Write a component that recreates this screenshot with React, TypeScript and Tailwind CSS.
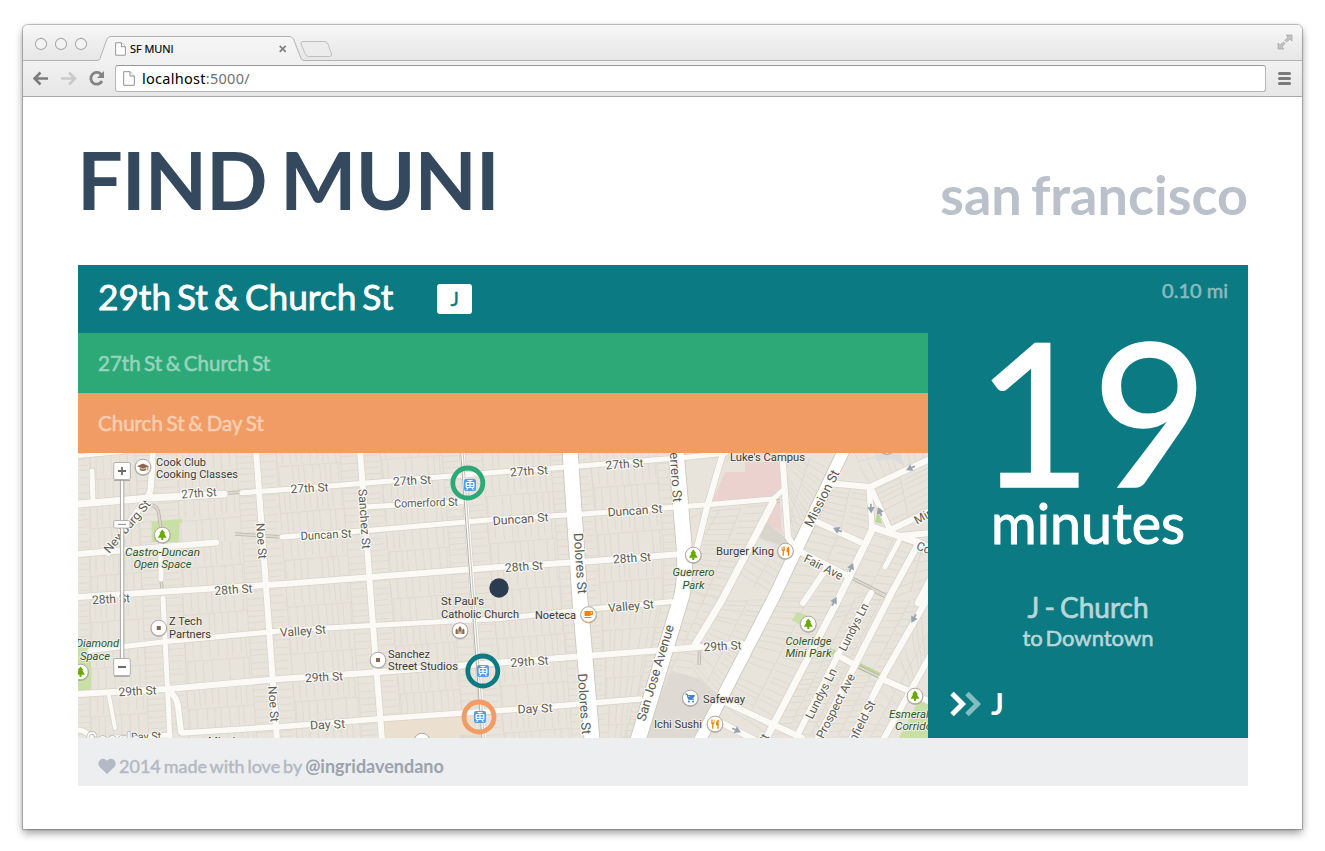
import React from "react";

type Pt = [number, number];
type Quad = [Pt, Pt, Pt, Pt];

const lerp = (a: Pt, b: Pt, t: number): Pt => [a[0] + (b[0] - a[0]) * t, a[1] + (b[1] - a[1]) * t];
const dist = (a: Pt, b: Pt) => Math.hypot(a[0] - b[0], a[1] - b[1]);
const seg = (a: Pt, b: Pt) => `M${a[0].toFixed(1)} ${a[1].toFixed(1)}L${b[0].toFixed(1)} ${b[1].toFixed(1)}`;

const makeRandom = (start: number) => {
  let s = start;
  return () => {
    s = (s * 16807) % 2147483647;
    return s / 2147483647;
  };
};

// Property lots of one block: narrow lots on both long sides, turned lots on the short sides.
function lots([a, b, c, d]: Quad, seed: number, ends: boolean): string {
  const rnd = makeRandom(seed * 7919 + 13);
  const at = (u: number, v: number) => lerp(lerp(a, b, u), lerp(d, c, u), v);
  const w = dist(a, b);
  const h = dist(a, d);
  const e = ends && w > 60 ? 20 / w : 0;
  let out = seg(at(e, 0.5), at(1 - e, 0.5));
  if (e) {
    out += seg(at(e, 0), at(e, 1)) + seg(at(1 - e, 0), at(1 - e, 1));
    for (let v = 4 / h; v < 1; v += (5 + rnd() * 3) / h) {
      out += seg(at(0, v), at(e * (0.8 + rnd() * 0.2), v)) + seg(at(1 - e, v), at(1, v));
    }
  }
  for (let u = e; u < 1 - e; u += (5 + rnd() * 4) / w) {
    const gap = rnd() * 0.1;
    out += seg(at(u, 0), at(u, 0.5 - gap));
    if (rnd() > 0.12) out += seg(at(u + 1.5 / w, 0.5), at(u + 1.5 / w, 1));
  }
  return out;
}

const rowsY: ((x: number) => number)[] = [
  (x) => 443 - (x - 290) * 0.06,
  (x) => 490 - (x - 280) * 0.08,
  (x) => 537 - (x - 280) * 0.082,
  (x) => 585 - (x - 280) * 0.082,
  (x) => 630 - (x - 290) * 0.075,
  (x) => 679 - (x - 280) * 0.074,
  (x) => 727 - (x - 280) * 0.077,
  (x) => 774 - (x - 280) * 0.077,
];
const colsX: ((y: number) => number)[] = [
  () => 70,
  (y) => 156 + (y - 453) * 0.046,
  (y) => 256 + (y - 453) * 0.073,
  (y) => 360 + (y - 453) * 0.078,
  (y) => 462 + (y - 453) * 0.077,
  (y) => 570 + (y - 453) * 0.078,
  (y) => (y < 570 ? 676 + (y - 453) * 0.08 : 685 - (y - 590) * 0.3),
];

const gridBlocks: Quad[] = [];
for (let c = 0; c < 6; c++) {
  for (let r = 0; r < 7; r++) {
    const corner = (ci: number, ri: number): Pt => {
      let x = colsX[ci](520);
      let y = rowsY[ri](x);
      x = colsX[ci](y);
      y = rowsY[ri](x);
      return [x, y];
    };
    gridBlocks.push([corner(c, r), corner(c + 1, r), corner(c + 1, r + 1), corner(c, r + 1)]);
  }
}

const slantBlocks: Quad[] = [
  [[770, 505], [722, 600], [690, 590], [712, 510]],
  [[834, 472], [790, 550], [785, 500], [785, 445]],
  [[812, 525], [772, 600], [735, 575], [775, 505]],
  [[722, 600], [660, 738], [620, 738], [690, 590]],
  [[772, 600], [702, 738], [680, 690], [725, 600]],
  [[868, 540], [838, 600], [780, 600], [812, 524]],
  [[838, 600], [768, 735], [725, 705], [778, 600]],
  [[870, 595], [800, 735], [770, 735], [842, 600]],
  [[890, 600], [820, 738], [800, 735], [872, 598]],
  [[928, 600], [852, 738], [822, 738], [893, 600]],
  [[928, 660], [885, 738], [855, 738], [928, 605]],
  [[915, 546], [890, 600], [840, 600], [872, 532]],
  [[868, 488], [868, 536], [814, 520], [833, 484]],
  [[928, 462], [928, 512], [890, 530], [872, 490]],
  [[870, 484], [928, 456], [928, 430], [845, 440]],
  [[928, 585], [928, 550], [915, 548], [893, 600]],
  [[780, 462], [722, 462], [740, 430], [780, 430]],
  [[720, 510], [708, 506], [690, 505], [690, 560]],
];

const lotPath = gridBlocks.map((q, i) => lots(q, i + 1, true)).join("");
const slantPath = slantBlocks.map((q, i) => lots(q, i + 80, false)).join("");

const roads: { d: string; w: number }[] = [
  { w: 7, d: "M78 504L150 498L224 494" },
  { w: 5, d: "M242 492.7L290 489.3L500 472L580 466L687 457.3L726 453" },
  { w: 5, d: "M282 537L373 530L500 519L583 514L710 504.6L773 499L782 491" },
  { w: 6, d: "M78 554L216 542.6" },
  { w: 6, d: "M78 597L290 583.5L500 567L580 562L682 554" },
  { w: 5, d: "M368 506.7L466 501.4" },
  { w: 5, d: "M90 650.6L167 641.6L290 630L500 618.5L600 608.3L672 601.6" },
  { w: 6, d: "M78 694L167 689L280 679L373 672.6L500 662.6L657 650.6L742 643.5" },
  { w: 5.5, d: "M182 733L290 726L377 719L500 710.6L640 699" },
  { w: 6, d: "M168 690Q177 697 178 706L181 732" },
  { w: 5, d: "M92 471L93 502" },
  { w: 4, d: "M109 696L115 728" },
  { w: 5, d: "M76 730Q88 730 92 740M112 738L170 735" },
  { w: 4, d: "M78 456L122 452" },
  { w: 6, d: "M153 450L151 486Q151 494 143 503L108 553" },
  { w: 5, d: "M161 545L161 579" },
  { w: 5, d: "M163 598L170 740" },
  { w: 6, d: "M256 450L267 600L277 740" },
  { w: 6, d: "M360 450L371 600L382 740" },
  { w: 5, d: "M462 450L473 600L484 740" },
  { w: 6, d: "M723 453L707 507L697 548" },
  { w: 6, d: "M782 450L788 537L797 551" },
  { w: 7, d: "M773 502L722 600L695 645" },
  { w: 6, d: "M832 483.5L870 487L930 459" },
  { w: 5.5, d: "M869 487L872 527M871 488L890 530" },
  { w: 6, d: "M813 520L860 542" },
  { w: 7, d: "M872 527L917 542L930 548" },
  { w: 6, d: "M890 530L930 511M900 536L930 533" },
  { w: 7, d: "M872 530L838 600L768 735" },
  { w: 5, d: "M899 541L885 567" },
  { w: 6.5, d: "M917 546L892 592L817 740" },
  { w: 6, d: "M797 550L850 577" },
  { w: 6, d: "M826 569L803 603" },
  { w: 6, d: "M871 593L837 657L797 736" },
  { w: 6, d: "M837 655L855 665" },
  { w: 6.5, d: "M930 594L882 678L851 740" },
  { w: 6, d: "M882 679L907 690L930 702" },
  { w: 6, d: "M930 656L883 740" },
  { w: 6, d: "M727 703L802 738" },
  { w: 6, d: "M718 721L755 740" },
  { w: 6.5, d: "M930 580L918 603" },
];

const avenues: { d: string; w: number }[] = [
  { w: 15, d: "M570 450L580 600L592 740" },
  { w: 15, d: "M676 450L684 545Q686 575 682 595L638 740" },
  { w: 11.5, d: "M844 450L775 595L700 740" },
];

const lanes = [
  "M150 505Q158 505 159 515L161 530",
  "M161 579L163 597",
  "M228 493L242 492",
  "M235 534L282 537",
  "M850 577L887 596",
  "M855 665L882 678",
  "M872 590L888 598",
  "M768 500L780 501",
  "M700 640L699 665",
];

type Label = { t: string; x: number; y: number; r?: number; w?: number; s?: number; k?: "park" | "place"; a?: "start" | "middle" | "end" };

// x and y give the middle of the text (or its start or end), w its drawn width.
const labels: Label[] = [
  { t: "27th St", x: 199, y: 493, r: -4, w: 35 },
  { t: "27th St", x: 309.5, y: 488, r: -3, w: 38 },
  { t: "27th St", x: 412, y: 480.5, r: -3, w: 38 },
  { t: "27th St", x: 529, y: 471, r: -4, w: 38 },
  { t: "27th St", x: 624.5, y: 464, r: -4, w: 38 },
  { t: "Comerford St", x: 426, y: 502.5, r: -2, w: 64, s: 11.5 },
  { t: "Duncan St", x: 326, y: 534.5, r: -3, w: 51, s: 11.5 },
  { t: "Duncan St", x: 520.5, y: 519, r: -4, w: 56 },
  { t: "Duncan St", x: 635, y: 510.5, r: -4, w: 55 },
  { t: "28th St", x: 233.5, y: 589.5, r: -4, w: 38 },
  { t: "28th St", x: 524, y: 566.5, r: -4, w: 38 },
  { t: "28th St", x: 632, y: 558, r: -4, w: 38 },
  { t: "28th St", x: 111, y: 599, r: -3, w: 38 },
  { t: "Valley St", x: 303, y: 631, r: -4, w: 46 },
  { t: "Valley St", x: 631, y: 606, r: -5, w: 46 },
  { t: "29th St", x: 137.5, y: 691, r: -3, w: 38 },
  { t: "29th St", x: 324, y: 677, r: -3, w: 38 },
  { t: "29th St", x: 529.5, y: 661.5, r: -4, w: 38 },
  { t: "29th St", x: 722.5, y: 646, r: -3, w: 38 },
  { t: "Day St", x: 327.5, y: 724.5, r: -3, w: 35 },
  { t: "Day St", x: 535, y: 708.5, r: -3, w: 35 },
  { t: "Day St", x: 146, y: 736.5, r: -2, w: 30 },
  { t: "Noe St", x: 261.5, y: 541, r: 86, w: 36 },
  { t: "Noe St", x: 273.5, y: 704, r: 86, w: 36 },
  { t: "Sanchez St", x: 364.5, y: 519, r: 86, w: 60 },
  { t: "Dolores St", x: 580, y: 563.5, r: 86, w: 61, s: 13 },
  { t: "Dolores St", x: 584, y: 704, r: 86, w: 61, s: 13 },
  { t: "Guerrero St", x: 675, y: 469, r: 86, w: 66, s: 13 },
  { t: "San Jose Avenue", x: 655.5, y: 673, r: -73, w: 100, s: 13 },
  { t: "Mission St", x: 822, y: 498.5, r: -63, w: 62, s: 13 },
  { t: "Newburg St", x: 127, y: 526.5, r: -50, w: 65, s: 12 },
  { t: "Fair Ave", x: 823.5, y: 567, r: 27, w: 42 },
  { t: "Lundys Ln", x: 853.5, y: 627, r: -63, w: 52 },
  { t: "Lundys Ln", x: 821, y: 693.5, r: -63, w: 55 },
  { t: "Prospect Ave", x: 835.5, y: 706, r: -63, w: 71 },
  { t: "Winfield St", x: 859, y: 727, r: -63, w: 58 },
  { t: "Mirabel", x: 915, y: 521, r: -30, a: "start" },
  { t: "Coso Ave", x: 917, y: 545, r: 22, a: "start" },
  { t: "Mission St", x: 753, y: 759, r: -62, w: 55 },
  { t: "Cook Club", x: 156, y: 461.5, k: "place", a: "start", w: 50 },
  { t: "Cooking Classes", x: 156, y: 474, k: "place", a: "start", w: 82 },
  { t: "Z Tech", x: 169, y: 621, k: "place", a: "start", w: 33 },
  { t: "Partners", x: 169, y: 634, k: "place", a: "start", w: 42 },
  { t: "Sanchez", x: 388, y: 653.5, k: "place", a: "start", w: 42 },
  { t: "Street Studios", x: 388, y: 666, k: "place", a: "start", w: 70 },
  { t: "St Paul's", x: 441, y: 601, k: "place", a: "start", w: 43 },
  { t: "Catholic Church", x: 441, y: 614, k: "place", a: "start", w: 78 },
  { t: "Noeteca", x: 535, y: 615, k: "place", a: "start", w: 41 },
  { t: "Burger King", x: 716, y: 551, k: "place", a: "start", w: 58 },
  { t: "Luke's Campus", x: 730, y: 457, k: "place", a: "start", w: 75 },
  { t: "Safeway", x: 703, y: 699, k: "place", a: "start", w: 42 },
  { t: "Ichi Sushi", x: 654, y: 724, k: "place", a: "start", w: 48 },
  { t: "Mission", x: 208, y: 741, k: "place", a: "start", w: 40 },
  { t: "Castro-Duncan", x: 162.5, y: 552, k: "park", w: 75 },
  { t: "Open Space", x: 162.5, y: 564, k: "park", w: 58 },
  { t: "Diamond", x: 119, y: 643, k: "park", a: "end", w: 43 },
  { t: "Space", x: 110, y: 656, k: "park", a: "end", w: 30 },
  { t: "Guerrero", x: 693.5, y: 572, k: "park", w: 42 },
  { t: "Park", x: 693.5, y: 585, k: "park", w: 22 },
  { t: "Coleridge", x: 808.5, y: 641, k: "park", w: 46 },
  { t: "Mini Park", x: 808.5, y: 653, k: "park", w: 46 },
  { t: "Esmeralda", x: 889, y: 714, k: "park", a: "start", w: 52 },
  { t: "Corridor", x: 895, y: 726, k: "park", a: "start", w: 41 },
];

const labelFill = { road: "#5d5b52", park: "#2b5a2b", place: "#3c3a38" };

function MapLabel({ t, x, y, r = 0, w, s = 12, k, a = "middle" }: Label) {
  return (
    <text
      transform={`translate(${x} ${y}) rotate(${r})`}
      y={4.2}
      fontSize={k ? 11.7 : s}
      textAnchor={a}
      textLength={w}
      lengthAdjust="spacingAndGlyphs"
      fill={labelFill[k ?? "road"]}
      fontStyle={k === "park" ? "italic" : "normal"}
      stroke={k ? "#efece6" : "#fbfaf7"}
      strokeWidth={2.2}
      strokeLinejoin="round"
      paintOrder="stroke"
    >
      {t}
    </text>
  );
}

function Poi({ x, y, children }: { x: number; y: number; children: React.ReactNode }) {
  return (
    <g transform={`translate(${x} ${y})`}>
      <circle cy={0.6} r={8.4} fill="#6f6a64" opacity={0.4} />
      <circle r={7.8} fill="#fff" stroke="#aaa49c" strokeWidth={0.9} />
      {children}
    </g>
  );
}

const Tree = () => <path d="M0-5.5L3-1.8H1.8L4.4 2.8H1V5H-1V2.8H-4.4L-1.8-1.8H-3Z" fill="#6aaa00" />;
const Square = () => <rect x={-2} y={-2} width={4} height={4} fill="#8d6748" />;
const Food = () => (
  <path d="M-3.9-4.5V-1.2Q-3.9 0-2.9.2V4.8H-1.6V.2Q-.5 0-.5-1.2V-4.5H-1.2V-1.4H-1.9V-4.5H-2.6V-1.4H-3.2V-4.5ZM3.7-4.5Q1 -4 1 0V1.2H2.3V4.8H3.7Z" fill="#f5820b" />
);
const arrowPath = "M-5 0H2M0-2.6L4.5 0L0 2.6Z";

function Stop({ x, y, color, ix, iy }: { x: number; y: number; color: string; ix: number; iy: number }) {
  return (
    <g>
      <circle cx={x} cy={y} r={15} fill="none" stroke={color} strokeWidth={4.8} />
      <rect x={ix - 6} y={iy - 6} width={12} height={12} rx={2} fill="#4f9fee" />
      <g transform={`translate(${ix} ${iy})`} fill="none" stroke="#fff">
        <path d="M-2.5-4.5H2.5M0-4.5V-2.8" strokeWidth={1} />
        <rect x={-3.8} y={-2.5} width={7.6} height={5} rx={0.8} strokeWidth={1.2} />
        <path d="M0-2.5V2.5M-3.9 0.2H3.9M-3.4 4.8L-2 3M3.4 4.8L2 3" strokeWidth={1.1} />
      </g>
    </g>
  );
}

function StreetMap() {
  return (
    <svg className="block h-[285px] w-[850px]" viewBox="78 453 850 285" fontFamily="Roboto, 'Liberation Sans', sans-serif">
      <rect x={78} y={453} width={850} height={285} fill="#e8e4dc" />
      <path d={lotPath} stroke="#dcd7cd" strokeWidth={0.7} fill="none" />
      <path d="M697 440H930V740H640L690 590Z" fill="#e8e4dc" />
      <path d={slantPath} stroke="#dad5cb" strokeWidth={0.7} fill="none" />
      <path d="M725 472H745V462H780L783 490L770 497L712 502Z" fill="#ebd2cf" />
      <path d="M772 503L780 503L782 532L765 523Z" fill="#ebd2cf" />
      <path d="M767 523L790 541L787 548L757 537Z" fill="#d9d5cd" />
      <path d="M672 671L700 679L717 694L706 722L690 740H640Z" fill="#ded9d2" />
      <path d="M383 722L473 715L478 740H385Z" fill="#ebe0d0" />
      <path d="M460 738V735H480V740H460Z" fill="#ded9d2" />
      <path d="M875 453H900L903 466L893 459L876 461Z" fill="#dcdcdd" />
      <path d="M151.7 521.5L182 519V523H179V542H151.7Z" fill="#c8dfa5" />
      <path d="M78 642L91 649V690L78 691Z" fill="#c8dfa5" />
      <path d="M878 510L875 522L882 524Z" fill="#b9d796" />
      <path d="M797 612L815 618L813 632L792 620Z" fill="#c8dfa5" />
      <path d="M829 650L840 656" stroke="#b9d796" strokeWidth={5} />
      <path d="M859 666L882 677" stroke="#b9d796" strokeWidth={6} />
      <path d="M918 702L930 700V740H898Z" fill="#c8dfa5" />
      <g fill="none">
        {lanes.map((d) => (
          <path key={d} d={d} stroke="#b9b4a9" strokeWidth={3.4} />
        ))}
        {lanes.map((d) => (
          <path key={d} d={d} stroke="#dedad1" strokeWidth={1.8} />
        ))}
      </g>
      <g fill="none" strokeLinecap="round" strokeLinejoin="round">
        {roads.map((r) => (
          <path key={r.d} d={r.d} stroke="#d8d3c9" strokeWidth={r.w + 1.4} />
        ))}
        {avenues.map((r) => (
          <path key={r.d} d={r.d} stroke="#cdc8bd" strokeWidth={r.w + 1.8} />
        ))}
        {roads.map((r) => (
          <path key={r.d} d={r.d} stroke="#fbfaf7" strokeWidth={r.w} />
        ))}
        {avenues.map((r) => (
          <path key={r.d} d={r.d} stroke="#ffffff" strokeWidth={r.w} />
        ))}
        <path d="M460.5 450L471.5 600L482 740" stroke="#a8a59e" strokeWidth={0.9} />
        <path d="M463 450L473.8 600L484.5 740" stroke="#bdb9b1" strokeWidth={0.8} />
      </g>

      <g fill="#98a3b1" stroke="#98a3b1" strokeWidth={2}>
        {[
          [911, 468, 155],
          [871, 508, 88],
          [880, 512, -112],
          [838, 530, 205],
          [851, 568, -68],
          [834, 602, -62],
          [914, 618, 118],
          [736, 730, 25],
        ].map(([x, y, r]) => (
          <path key={`${x}-${y}`} d={arrowPath} transform={`translate(${x} ${y}) rotate(${r}) scale(.85)`} />
        ))}
      </g>

      {labels.map((l, i) => (
        <MapLabel key={i} {...l} />
      ))}

      <Poi x={143} y={467}>
        <path d="M-6-.8L0-3.4L6-.8L0 1.8ZM-3.2 1V3Q0 4.8 3.2 3V1L0 2.4Z" fill="#8d6748" />
        <path d="M4.8-.6V3.5" stroke="#8d6748" strokeWidth={0.9} />
      </Poi>
      <Poi x={162.3} y={535}><Tree /></Poi>
      <Poi x={80.5} y={672}><Tree /></Poi>
      <Poi x={693.3} y={555}><Tree /></Poi>
      <Poi x={808.3} y={624}><Tree /></Poi>
      <Poi x={915} y={696}><Tree /></Poi>
      <Poi x={158.8} y={628}><Square /></Poi>
      <Poi x={378} y={660}><Square /></Poi>
      <Poi x={422} y={741}><Square /></Poi>
      <Poi x={887} y={446}><circle r={7.4} fill="#fff" /></Poi>
      <Poi x={785.5} y={551}><Food /></Poi>
      <Poi x={715} y={724}><Food /></Poi>
      <Poi x={460} y={630.5}>
        <path d="M-4.4 3.6V-.6L-3.3-2L-2.2-.6V3.6ZM-1.6 3.6V-2.2L0-4.4L1.6-2.2V3.6H.6V1H-.6V3.6ZM2.2 3.6V-.6L3.3-2L4.4-.6V3.6Z" fill="#8d6748" />
      </Poi>
      <Poi x={588.5} y={614.5}>
        <path d="M-4-3.6H4.4V.4H2V1.6H-3Q-4 1.6-4 .4ZM2.2-2.4V-.8H3.3V-2.4ZM-4.2 2.5H2.8V3.6H-4.2Z" fill="#f5820b" fillRule="evenodd" />
      </Poi>
      <Poi x={690.3} y={698}>
        <path d="M-5-4H-3.2L-1.8 1.3H3.6M-2.8-2.4H4.2L3-.4H-2.2Z" fill="#3f7fd0" stroke="#3f7fd0" strokeWidth={1} />
        <circle cx={-1.4} cy={3.4} r={1} fill="#3f7fd0" />
        <circle cx={2.8} cy={3.4} r={1} fill="#3f7fd0" />
      </Poi>

      <text x={86} y={746.5} fontSize={20} fill="#ffffff" stroke="#b9b6b1" strokeWidth={1.6} paintOrder="stroke" textLength={54} lengthAdjust="spacingAndGlyphs">
        Google
      </text>

      <rect x={120.4} y={478} width={3.4} height={182} fill="#fff" stroke="#a3a19d" strokeWidth={0.9} />
      <g fill="#fff" stroke="#b3b1ad" strokeWidth={1}>
        <path d="M114 480.5H130M114 676.5H130" stroke="#8b8985" strokeWidth={1.2} opacity={0.6} />
        <rect x={113.7} y={462.5} width={16.6} height={17} rx={1.5} />
        <rect x={113.7} y={658.5} width={16.6} height={17} rx={1.5} />
        <rect x={113.7} y={520.5} width={16.2} height={7.6} rx={1.5} />
      </g>
      <path d="M118 471H126M122 467V475M118 667H126" stroke="#6b6b6b" strokeWidth={1.8} />
      <path d="M118 524.4H126" stroke="#8a8a8a" strokeWidth={1} />

      <Stop x={467.8} y={483} ix={470} iy={485} color="#2ca977" />
      <Stop x={482.8} y={671} ix={483} iy={671} color="#0b7a82" />
      <Stop x={479} y={717} ix={480} iy={717} color="#f19c65" />
      <circle cx={499} cy={588} r={9.7} fill="#2b3b50" />
    </svg>
  );
}

function PageIcon({ className }: { className: string }) {
  return (
    <svg viewBox="0 0 12 15" className={className} fill="#fff" stroke="#8f8f8f" strokeWidth={1}>
      <path d="M.7.7H7L11.3 5V14.3H.7Z" />
      <path d="M7 .7V5H11.3" />
    </svg>
  );
}

function TabStrip() {
  return (
    <div className="relative h-9 bg-linear-to-b from-[#f7f7f7] to-[#e6e6e6]">
      <svg className="absolute inset-0 h-9 w-full" viewBox="23 25 1279 36">
        <defs>
          <linearGradient id="tab" x1="0" y1="0" x2="0" y2="1">
            <stop offset="0" stopColor="#f6f6f6" />
            <stop offset="1" stopColor="#f0f0f0" />
          </linearGradient>
        </defs>
        <path d="M23 60.5H97Q99 60.5 100 58.5L107 39Q108 36.5 111 36.5H289Q292 36.5 293.5 39L301 58.5Q302 60.5 304 60.5H1302V62H23Z" fill="url(#tab)" />
        <path d="M23 60.5H97Q99 60.5 100 58.5L107 39Q108 36.5 111 36.5H289Q292 36.5 293.5 39L301 58.5Q302 60.5 304 60.5H1302" fill="none" stroke="#b3b3b3" />
        <path d="M303 41.5H324Q327 41.5 328 44L331.5 54Q332 56.5 329.5 56.5H309Q306.5 56.5 305.5 54.5L301 44Q300.5 41.5 303 41.5Z" fill="#ececec" stroke="#bebebe" />
        {[41, 61, 81].map((x) => (
          <circle key={x} cx={x} cy={44} r={5.6} fill="#f3f3f3" stroke="#ababab" strokeWidth={1.1} />
        ))}
        <path d="M279.7 45.9L285.7 51.9M285.7 45.9L279.7 51.9" stroke="#808080" strokeWidth={1.6} />
        <path d="M1286 35H1292V41L1290 39L1286.5 42L1285 40.5L1288 37ZM1284 49H1278V43L1280 45L1283.5 42L1285 43.5L1282 47Z" fill="#c3c3c3" stroke="#a5a5a5" strokeWidth={0.7} />
      </svg>
      <div className="relative flex h-full items-center gap-[4px] pt-[12px] pl-[92px]">
        <PageIcon className="h-[14px] w-[11px]" />
        <span className="font-['Open_Sans',sans-serif] text-[11px] font-medium tracking-[-0.05px] text-black [-webkit-text-stroke:0.2px_#000]">SF MUNI</span>
      </div>
    </div>
  );
}

function Toolbar() {
  return (
    <div className="flex h-9 items-center border-b border-[#a9a9a9] bg-linear-to-b from-[#f1f1f1] to-[#e7e7e7] pl-[10px]">
      <svg className="h-9 w-[82px] shrink-0" viewBox="33 61 82 36" fill="none" strokeWidth={2.6}>
        <path d="M48 78.5H35M40.5 72.5L34.5 78.5L40.5 84.5" stroke="#7c7c7c" />
        <path d="M61 78.5H74M69 72.5L75 78.5L69 84.5" stroke="#c9c9c9" />
        <path d="M101.5 74.8A5.9 5.9 0 1 0 102 81" stroke="#838383" strokeWidth={2.8} />
        <path d="M104 71V78H97Z" fill="#838383" />
      </svg>
      <div className="flex h-[27px] w-[1151px] items-center gap-[7px] rounded-[3px] border border-[#b5b5b5] border-t-[#989898] bg-white pl-[7px]">
        <PageIcon className="h-[15px] w-[12px]" />
        <span className="font-['Noto_Sans',sans-serif] text-[14.5px] leading-none tracking-[0.28px] text-[#6f6f6f]">
          <span className="text-black">localhost</span>:5000/
        </span>
      </div>
      <div className="ml-[12px] flex w-[13px] flex-col gap-[2px]">
        <div className="h-[3px] rounded-sm bg-[#7a7a7a]" />
        <div className="h-[3px] rounded-sm bg-[#7a7a7a]" />
        <div className="h-[3px] rounded-sm bg-[#7a7a7a]" />
      </div>
    </div>
  );
}

export default function App() {
  return (
    <div className="h-[851px] w-[1325px] overflow-hidden bg-white pt-[25px] pl-[23px] font-['Lato',sans-serif]">
      <div className="h-[804px] w-[1279px] overflow-hidden rounded-t-[5px] bg-white shadow-[0_0_1px_1px_rgba(0,0,0,0.25),0_4px_9px_rgba(0,0,0,0.4)]">
        <TabStrip />
        <Toolbar />
        <main className="pr-[54px] pl-[55px]">
          <header className="flex h-[168px] items-start justify-between whitespace-nowrap">
            <h1 className="mt-[32px] -ml-px text-[81px] leading-[100px] font-bold tracking-[-1.1px] text-[#34495e] [word-spacing:-5px]">FIND MUNI</h1>
            <p className="mt-[63px] text-[54px] leading-[70px] font-bold text-[#bac1ca] [word-spacing:-4px]">san francisco</p>
          </header>
          <section className="flex h-[473px] bg-[#0b7a82] whitespace-nowrap">
            <div className="w-[850px]">
              <div className="flex h-[68px] items-center gap-[44px] pl-5 text-white">
                <span className="-mt-1 text-[35.2px] leading-none [word-spacing:-3px] [-webkit-text-stroke:0.8px_#fff]">29th St &amp; Church St</span>
                <span className="flex h-[30px] w-[35px] items-center justify-center rounded-[3px] bg-white pb-[2px] text-[20px] text-[#0b7a82] [-webkit-text-stroke:0.4px_#0b7a82]">J</span>
              </div>
              <div className="flex h-[60px] items-center bg-[#2ca977] pl-5 text-[20.5px] text-[#95d4bb] [word-spacing:-1.7px] [-webkit-text-stroke:0.6px_#95d4bb]">27th St &amp; Church St</div>
              <div className="flex h-[60px] items-center bg-[#f19c65] pl-5 text-[20.5px] text-[#f8cdb2] [word-spacing:-1.5px] [-webkit-text-stroke:0.6px_#f8cdb2]">Church St &amp; Day St</div>
              <StreetMap />
            </div>
            <div className="flex w-80 flex-col items-center text-white">
              <p className="mt-[10px] mr-5 self-end text-[20px] leading-[30px] text-[#85bcc0] [-webkit-text-stroke:0.6px_#85bcc0]">0.10 mi</p>
              <p className="mt-[5px] ml-[8px] h-[178px] text-[200px] leading-[200px] [-webkit-text-stroke:1.5px_#fff]">19</p>
              <p className="text-[55.5px] leading-[70px] [-webkit-text-stroke:1px_#fff]">minutes</p>
              <p className="mt-[32px] text-[28px] leading-[34px] text-[#b6d7d9] [word-spacing:-2px] [-webkit-text-stroke:0.7px_#b6d7d9]">J - Church</p>
              <p className="text-[22px] leading-[28px] text-[#b6d7d9] [word-spacing:-3px] [-webkit-text-stroke:0.6px_#b6d7d9]">to Downtown</p>
              <div className="mt-[35px] flex items-center gap-[10px] self-start pl-[22px]">
                <svg className="h-[26px] w-[31px]" viewBox="0 0 31 26" fill="none" strokeWidth={5}>
                  <path d="M17 2.5L27.5 13L17 23.5" stroke="#85bcc0" />
                  <path d="M2 2.5L12.5 13L2 23.5" stroke="#fff" />
                </svg>
                <span className="-mt-[2px] text-[30px] leading-[36px] font-bold">J</span>
              </div>
            </div>
          </section>
          <footer className="flex h-12 items-center bg-[#edeef0] pt-[8px] pl-5 text-[18px] whitespace-nowrap text-[#b3bac3]">
            <svg className="mr-[3px] h-[17px] w-[18px]" viewBox="0 0 18 16" fill="#b3bac3">
              <path d="M9 15.5L1.7 8.5C-2.2 4 3.5-3 9 2.2C14.5-3 20.2 4 16.3 8.5Z" />
            </svg>
            <span className="mr-[3px] [word-spacing:-1.7px] [-webkit-text-stroke:0.5px_#b3bac3]">2014 made with love by</span>
            <span className="font-bold text-[#9aa3ae]">@ingridavendano</span>
          </footer>
        </main>
      </div>
    </div>
  );
}
